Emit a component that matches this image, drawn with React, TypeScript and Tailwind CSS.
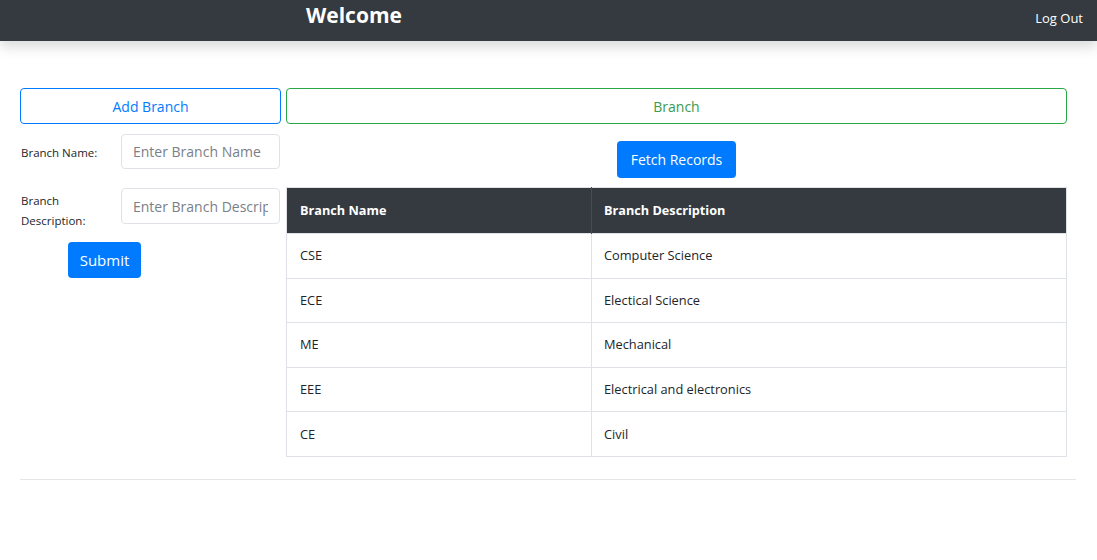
import React from 'react';

const rows = [
  { name: 'CSE', desc: 'Computer Science' },
  { name: 'ECE', desc: 'Electical Science' },
  { name: 'ME', desc: 'Mechanical' },
  { name: 'EEE', desc: 'Electrical and electronics' },
  { name: 'CE', desc: 'Civil' },
];

const App: React.FC = () => {
  return (
    <div className="min-h-screen bg-white text-[#212529]" style={{ fontFamily: '"Open Sans", "Noto Sans", sans-serif' }}>
      {/* Navbar */}
      <nav className="h-[41px] bg-[#343a40] flex items-center shadow-[0_6px_12px_rgba(0,0,0,0.15)]">
        <div className="w-[306px]" />
        <span className="text-white font-bold text-[21px] -mt-[9px]">Welcome</span>
        <div className="flex-1" />
        <span className="text-white text-[13px] pr-[14px] -mt-[3px]">Log Out</span>
      </nav>

      <div className="pl-[20px] pr-[30px] pt-[47px]">
        <div className="flex gap-[5px]">
          {/* Left: add form */}
          <div className="w-[261px] shrink-0">
            <button className="w-full h-[36px] border border-[#007bff] rounded-[4px] text-[#007bff] text-[14px]">
              Add Branch
            </button>
            <div className="flex items-center mt-[10px]">
              <label className="w-[101px] pl-[1px] text-[11.5px] pt-[3px]">Branch Name:</label>
              <input
                type="text"
                placeholder="Enter Branch Name"
                className="w-[159px] h-[35px] border border-[#dfe3e7] rounded-[4px] px-[11px] text-[14px] placeholder:text-[#7a8087] outline-none"
              />
            </div>
            <div className="flex items-start mt-[19px]">
              <label className="w-[101px] pl-[1px] text-[11.5px] leading-[20px] mt-[3px]">
                Branch
                <br />
                Description:
              </label>
              <input
                type="text"
                placeholder="Enter Branch Description"
                className="w-[159px] h-[36px] border border-[#dfe3e7] rounded-[4px] px-[11px] text-[14px] placeholder:text-[#7a8087] outline-none"
              />
            </div>
            <button className="ml-[48px] mt-[11px] w-[73px] h-[36px] bg-[#007bff] rounded-[4px] text-white text-[15px]">
              Submit
            </button>
          </div>

          {/* Right: records */}
          <div className="flex-1 flex flex-col">
            <button className="w-full h-[36px] border border-[#28a745] rounded-[4px] text-[#3a9a4f] text-[14px]">
              Branch
            </button>
            <div className="flex justify-center mt-[17px]">
              <button className="h-[37px] px-[14px] bg-[#007bff] rounded-[4px] text-white text-[14px]">
                Fetch Records
              </button>
            </div>
            <table className="mt-[9px] w-full border-collapse border border-[#dee2e6] text-[12.8px]">
              <thead>
                <tr className="bg-[#343a40] text-white h-[46px]">
                  <th className="w-[305px] text-left font-bold pl-[13px] border-r border-[#454d55] text-[12.7px]">Branch Name</th>
                  <th className="text-left font-bold pl-[12px] text-[12.7px]">Branch Description</th>
                </tr>
              </thead>
              <tbody>
                {rows.map((r) => (
                  <tr key={r.name} className="h-[44.6px] border-t border-[#dee2e6]">
                    <td className="pl-[13px] border-r border-[#dee2e6]">{r.name}</td>
                    <td className="pl-[12px]">{r.desc}</td>
                  </tr>
                ))}
              </tbody>
            </table>
          </div>
        </div>
      </div>
      <hr className="mt-[22px] ml-[20px] mr-[21px] border-t border-[#e3e5e8]" />
    </div>
  );
};

export default App;
